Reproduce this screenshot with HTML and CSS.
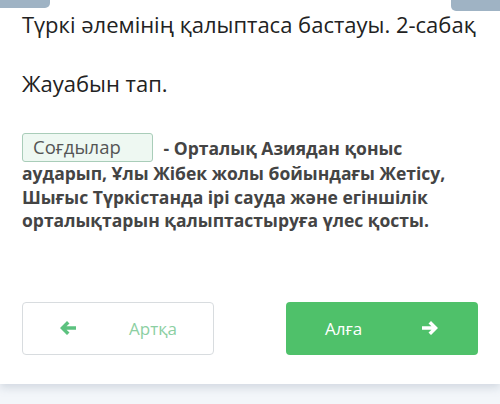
FILE: index.html
```html
<!DOCTYPE html>
<html lang="kk">

<head>
    <meta charset="UTF-8">
    <meta name="viewport" content="width=device-width, initial-scale=1.0">
    <title>Түркі әлемінің қалыптаса бастауы</title>
    <link rel="stylesheet" href="styles.css">
</head>

<body>
    <div class="page">
        <div class="tabs">
            <span class="tab tab-left"></span>
            <span class="tab tab-right"></span>
        </div>

        <main class="lesson">
            <h1 class="lesson-title">Түркі әлемінің қалыптаса бастауы. 2-сабақ</h1>
            <p class="task">Жауабын тап.</p>

            <p class="question">
                <span class="answer">Соғдылар</span>
                - Орталық Азиядан қоныс аударып, Ұлы Жібек жолы бойындағы Жетісу, Шығыс Түркістанда ірі сауда және егіншілік орталықтарын қалыптастыруға үлес қосты.
            </p>

            <div class="nav">
                <button class="nav-btn back">
                    <svg class="arrow" width="18" height="16" viewBox="0 0 18 16">
                        <path d="M8 1 L1 8 L8 15 L10.5 12.5 L7.5 9.8 H17 V6.2 H7.5 L10.5 3.5 Z" fill="#5cc27f"/>
                    </svg>
                    <span>Артқа</span>
                </button>
                <button class="nav-btn next">
                    <span>Алға</span>
                    <svg class="arrow" width="18" height="16" viewBox="0 0 18 16">
                        <path d="M10 1 L17 8 L10 15 L7.5 12.5 L10.5 9.8 H1 V6.2 H10.5 L7.5 3.5 Z" fill="#fff"/>
                    </svg>
                </button>
            </div>
        </main>

        <footer class="footer"></footer>
    </div>
</body>

</html>
```

FILE: styles.css
```css
body {
    margin: 0;
    font-family: "Open Sans", Arial, sans-serif;
    background-color: #f3f6fa;
}

.page {
    width: 500px;
    height: 404px;
    overflow: hidden;
    display: flex;
    flex-direction: column;
}

.tabs {
    position: relative;
    height: 0;
}

.tab {
    position: absolute;
    top: 0;
    height: 8px;
    background-color: #9fb3c4;
}

.tab-left {
    left: 0;
    width: 50px;
    border-bottom-right-radius: 5px;
}

.tab-right {
    right: 0;
    width: 49px;
    height: 11px;
    border-bottom-left-radius: 5px;
}

.lesson {
    background-color: #fff;
    height: 384px;
    box-sizing: border-box;
    padding: 9px 22px 0;
    box-shadow: 0 4px 8px rgba(120, 135, 155, 0.25);
}

.lesson-title {
    margin: 0;
    font-size: 22px;
    font-weight: 400;
    line-height: 30px;
    color: #222;
}

.task {
    margin: 29px 0 0;
    font-size: 22px;
    line-height: 30px;
    color: #222;
}

.question {
    margin: 35px 0 0;
    font-size: 17.5px;
    font-weight: 700;
    line-height: 23.5px;
    color: #444;
}

.answer {
    display: inline-block;
    width: 131px;
    height: 29px;
    box-sizing: border-box;
    padding: 1px 10px 0;
    margin-right: 6px;
    border: 1px solid #a9cdb9;
    border-radius: 3px;
    background-color: #eef8f2;
    font-size: 18.5px;
    font-weight: 400;
    line-height: 23px;
    color: #555;
    vertical-align: 1px;
}

.nav {
    display: flex;
    justify-content: space-between;
    margin-top: 69px;
}

.nav-btn {
    width: 192px;
    height: 53px;
    display: flex;
    align-items: center;
    border-radius: 4px;
    font-family: "Open Sans", Arial, sans-serif;
    font-size: 17px;
    cursor: pointer;
}

.back {
    border: 1px solid #d8dcdf;
    background-color: #fff;
    color: #8ccfa2;
    padding: 0 0 0 36px;
    gap: 52px;
}

.next {
    border: none;
    background-color: #4fc16a;
    color: #fff;
    padding: 0 0 0 39px;
    gap: 59px;
}

.footer {
    flex: 1;
}
```
